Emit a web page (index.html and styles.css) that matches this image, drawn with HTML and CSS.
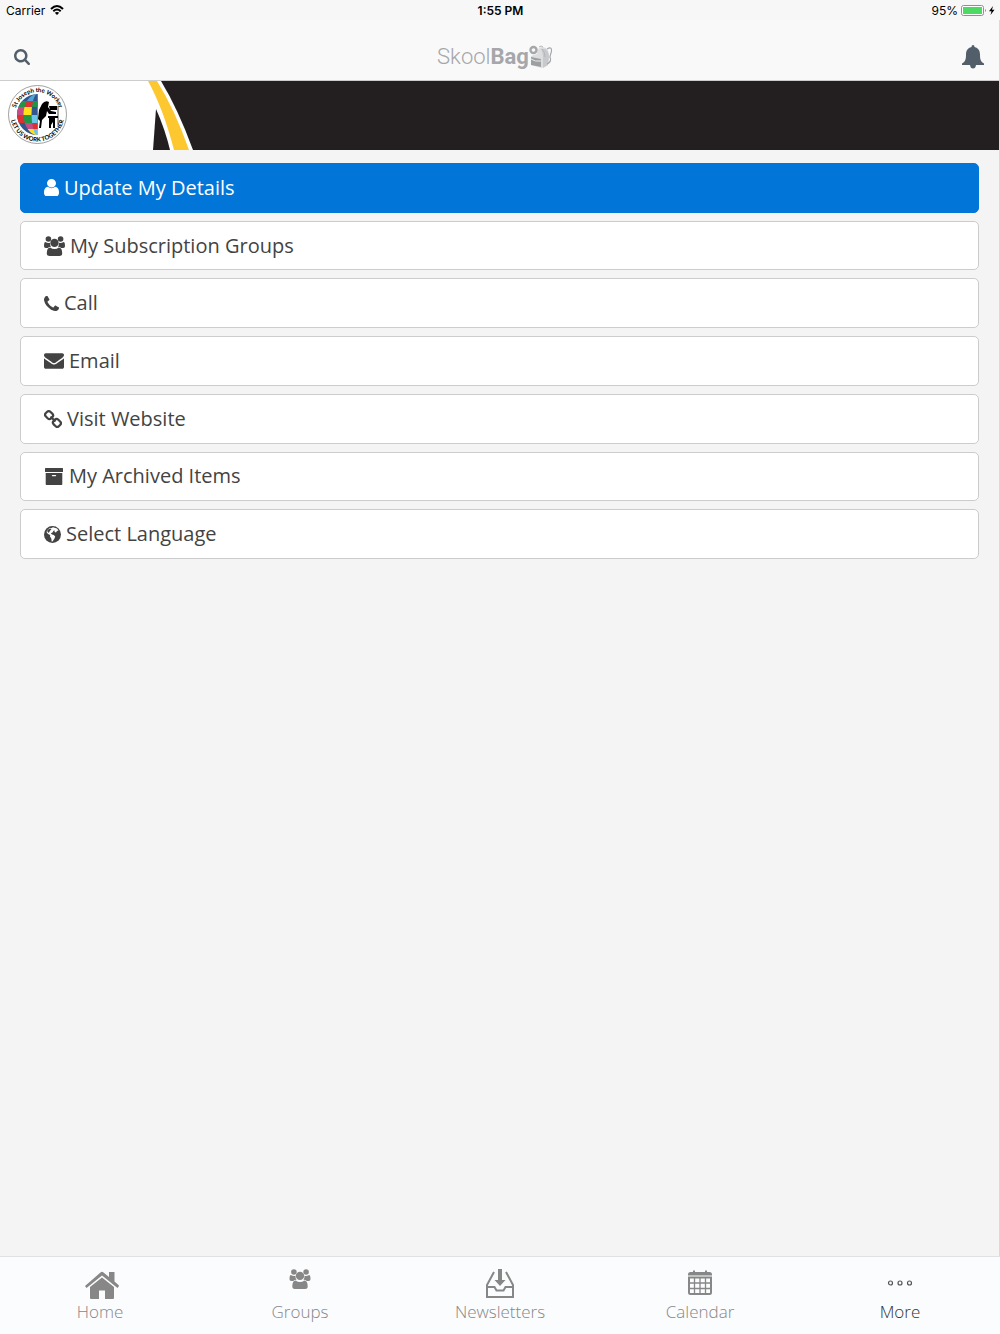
FILE: index.html
```html
<!DOCTYPE html>
<html lang="en">

<head>
    <meta charset="UTF-8">
    <meta name="viewport" content="width=device-width, initial-scale=1.0">
    <title>SkoolBag - More</title>
    <link rel="stylesheet" href="styles.css">
</head>

<body>
    <svg class="defs" aria-hidden="true">
        <symbol id="icon-users" viewBox="0 0 21 20">
            <circle cx="4.4" cy="3" r="2.8"/>
            <circle cx="16.6" cy="3" r="2.8"/>
            <circle cx="10.5" cy="6.9" r="4.2"/>
            <path d="M1.4 6Q3 7 4.5 7Q5.300 7 6 6.700Q5.800 9 7 10.700Q5 10.800 3.800 12H1.800Q0 12 0 10.300Q0 6 1.400 6Z"/>
            <path d="M19.600 6Q18 7 16.500 7Q15.700 7 15 6.700Q15.200 9 14 10.700Q16 10.800 17.200 12H19.200Q21 12 21 10.300Q21 6 19.600 6Z"/>
            <path d="M6.200 11.400Q8 13 10.500 13T14.800 11.400Q18.200 11.400 18.200 17.500Q18.200 20 15.500 20H5.500Q2.800 20 2.800 17.500Q2.800 11.400 6.200 11.400Z"/>
        </symbol>
    </svg>
    <div class="status-bar">
        <div class="carrier">
            <span>Carrier</span>
            <svg width="14" height="10" viewBox="0 0 14 10" fill="none" stroke="#000" stroke-width="2">
                <path d="M1 4Q7-2 13 4M3.300 6.300Q7 2.800 10.700 6.300"/>
                <path d="M7 10L4.800 7.800Q7 6 9.200 7.800Z" fill="#000" stroke="none"/>
            </svg>
        </div>
        <div class="time">1:55 PM</div>
        <div class="battery">
            <span>95%</span>
            <svg width="34" height="11" viewBox="0 0 34 11">
                <rect x=".5" y=".5" width="22" height="10" rx="2" fill="#fff" stroke="#8f8f8f"/>
                <rect x="2" y="2" width="19" height="7" fill="#4cd964"/>
                <path d="M24 4Q26 5.500 24 7Z" fill="#8f8f8f"/>
                <path d="M32 1L28 6.300H30.500L29.500 10L33.500 4.800H31Z"/>
            </svg>
        </div>
    </div>
    <div class="app">
        <header class="navbar">
            <button type="button" class="icon-button" aria-label="Search">
                <svg width="16" height="16" viewBox="64 128 1664 1664" fill="currentColor"><path d="M1216 832q0-185-131.500-316.500t-316.500-131.500-316.500 131.500-131.500 316.500 131.500 316.500 316.500 131.500 316.500-131.500 131.500-316.500zm512 832q0 52-38 90t-90 38q-54 0-90-38l-343-342q-179 124-399 124-143 0-273.500-55.500t-225-150-150-225-55.500-273.500 55.500-273.500 150-225 225-150 273.500-55.500 273.500 55.500 225 150 150 225 55.500 273.500q0 220-124 399l343 343q37 37 37 90z"/></svg>
            </button>
            <div class="brand">
                <span>Skool<b>Bag</b></span>
                <svg width="24" height="24" viewBox="0 0 24 24" fill="none">
                    <path d="M8 9Q8 2 14 2Q20 3 20 11L19 20L13 23L2 20V11Z" fill="#dcdddf"/>
                    <path d="M16 4Q20 6 20 12L19 20L14 23V11Q14 7 12 4" fill="#c8c9cc"/>
                    <path d="M10 2Q12 0 14 2M13 4Q16 7 16 12" stroke="#b4b6b9"/>
                    <path d="M2 12L12 14V22L2 20Z" fill="#9da0a3"/>
                    <path d="M2 14Q6 17 12 16" stroke="#e7e8e9"/>
                    <circle cx="4.500" cy="5" r="3" stroke="#a5a7aa" stroke-width="2.400"/>
                    <path d="M18 4Q23 1 22.500 6C22 10 20 10 21.500 14Q22 17 18 19" stroke="#a5a7aa" stroke-width="1.200"/>
                </svg>
            </div>
            <button type="button" class="icon-button" aria-label="Notifications">
                <svg width="22" height="24" viewBox="0 0 22 24" fill="currentColor"><path d="M9.500 2Q9.500 0 11 0T12.500 2C16.500 3 18 6 18 9.500C18 14 18.500 16.500 22 18.500V20H14Q13.500 23.500 11 23.500T8 20H0V18.500C3.500 16.500 4 14 4 9.500C4 6 5.500 3 9.500 2Z"/></svg>
            </button>
        </header>
        <div class="banner">
            <svg width="200" height="69" viewBox="0 0 200 69" role="img" aria-label="St Joseph the Worker">
                <path d="M0 0H161Q178 28 193 69H0Z" fill="#fff"/>
                <path d="M148 0H157Q175 29 189 69H174Q163 27 148 0Z" fill="#fdc82f"/>
                <path d="M156 28Q165 48 170 69H153Z" fill="#231f20"/>
                <circle cx="37.500" cy="33.500" r="29" fill="#fff" stroke="#777" stroke-width=".7"/>
                <clipPath id="globe-outer"><path d="M37.500 13A20.500 20.500 0 0 0 37.500 54Z"/></clipPath>
                <clipPath id="globe-middle"><path d="M37.500 13A14 20.500 0 0 0 37.500 54Z"/></clipPath>
                <clipPath id="globe-inner"><path d="M37.500 13A6 20.500 0 0 0 37.500 54Z"/></clipPath>
                <g clip-path="url(#globe-outer)">
                    <path d="M16 12H38V55H16Z" fill="#31568f"/>
                    <path d="M16 20H38V26H16Z" fill="#229447"/>
                    <path d="M16 26H38V34H16Z" fill="#c44d87"/>
                    <path d="M16 34H38V42H16Z" fill="#dc3031"/>
                </g>
                <g clip-path="url(#globe-middle)">
                    <path d="M16 12H38V20H16Z" fill="#4fa6d5"/>
                    <path d="M16 20H38V26H16Z" fill="#dc3031"/>
                    <path d="M16 26H38V34H16Z" fill="#ffe11a"/>
                    <path d="M16 34H38V42H16Z" fill="#229447"/>
                    <path d="M16 42H38V48H16Z" fill="#c44d87"/>
                    <path d="M16 48H38V55H16Z" fill="#ffe11a"/>
                </g>
                <g clip-path="url(#globe-inner)">
                    <path d="M16 12H38V20H16Z" fill="#31568f"/>
                    <path d="M16 20H38V26H16Z" fill="#229447"/>
                    <path d="M16 26H38V34H16Z" fill="#31568f"/>
                    <path d="M16 34H38V42H16Z" fill="#6ac5ea"/>
                    <path d="M16 42H38V48H16Z" fill="#dc3031"/>
                    <path d="M16 48H38V55H16Z" fill="#6ac5ea"/>
                </g>
                <path d="M42 23Q45 19 49 21L48 26L51 30L56 31V33L49 33L47 30L46 35L42 39L41 47H39L40 40L38 38L39 29Z"/>
                <path d="M49 25H57V29H50ZM48 35H58V37H55V47H53V41L51 44V47H49V37H48Z"/>
                <path d="M58 25V43" stroke="#000" stroke-width=".7"/>
                <path id="arc-top" d="M15 33.500A22.500 22.500 0 0 1 60 33.500" fill="none"/>
                <path id="arc-bottom" d="M10.500 33.500A27 27 0 0 0 64.500 33.500" fill="none"/>
                <text class="crest-text"><textPath href="#arc-top" startOffset="50%">St Joseph the Worker</textPath></text>
                <text class="crest-text"><textPath href="#arc-bottom" startOffset="50%">LET US WORK TOGETHER</textPath></text>
            </svg>
        </div>
        <main class="menu">
            <button type="button" class="menu-item primary">
                <svg width="15" height="17" viewBox="256 128 1280 1536" preserveAspectRatio="none"><path d="M1536 1399q0 109-62.500 187t-150.500 78h-854q-88 0-150.500-78t-62.500-187q0-85 8.500-160.500t31.500-152 58.500-131 94-89 134.500-34.500q131 128 313 128t313-128q76 0 134.500 34.500t94 89 58.500 131 31.500 152 8.500 160.500zm-256-887q0 159-112.500 271.500t-271.500 112.500-271.500-112.500-112.500-271.500 112.500-271.500 271.500-112.500 271.500 112.500 112.500 271.500z"/></svg>
                Update My Details
            </button>
            <button type="button" class="menu-item">
                <svg width="21" height="20"><use href="#icon-users"/></svg>
                My Subscription Groups
            </button>
            <button type="button" class="menu-item">
                <svg width="15" height="15" viewBox="192 128 1408 1408"><path d="M1600 1240q0 27-10 70.500t-21 68.500q-21 50-122 106-94 51-186 51-27 0-52.500-3.500t-57.500-12.500-47.500-14.500-55.500-20.500-49-18q-98-35-175-83-128-79-264.500-215.500t-215.500-264.500q-48-77-83-175-3-9-18-49t-20.500-55.500-14.500-47.500-12.500-57.500-3.500-52.500q0-92 51-186 56-101 106-122 25-11 68.500-21t70.500-10q14 0 21 3 18 6 53 76 11 19 30 54t35 63.500 31 53.500q3 4 17.500 25t21.500 35.500 7 28.500q0 20-28.500 50t-62 55-62 53-28.500 46q0 9 5 22.500t8.500 20.500 14 24 11.500 19q76 137 174 235t235 174q2 1 19 11.500t24 14 20.500 8.500 22.500 5q18 0 46-28.500t53-62 55-62 50-28.500q14 0 28.500 7t35.500 21.500 25 17.500q25 15 53.500 31t63.500 35 54 30q70 35 76 53 3 7 3 21z"/></svg>
                Call
            </button>
            <button type="button" class="menu-item">
                <svg width="20" height="16" viewBox="0 256 1792 1408"><path d="M1792 710v794q0 66-47 113t-113 47h-1472q-66 0-113-47t-47-113v-794q44 49 101 87 362 246 497 345 57 42 92.500 65.500t94.500 48 110 24.500h2q51 0 110-24.500t94.500-48 92.500-65.500q170-123 498-345 57-39 100-87zm0-294q0 79-49 151t-122 123q-376 261-468 325-10 7-42.500 31t-54 38.500-52 32.500-57.500 27-50 9h-2q-23 0-50-9t-57.500-27-52-32.500-54-38.500-42.500-31q-91-64-262-182.500t-205-142.500q-62-42-117-115.500t-55-136.500q0-78 41.500-130t118.500-52h1472q65 0 112.500 47t47.500 113z"/></svg>
                Email
            </button>
            <button type="button" class="menu-item">
                <svg width="18" height="18" viewBox="0 0 18 18">
                    <g fill="none" stroke="#434343" stroke-width="2.200">
                        <rect x="1.300" y="1.800" width="7.600" height="6.600" rx="2.600" transform="rotate(45 5.100 5.100)"/>
                        <rect x="9.100" y="9.600" width="7.600" height="6.600" rx="2.600" transform="rotate(45 12.900 12.900)"/>
                        <path d="M6.500 6.500L11.500 11.500"/>
                    </g>
                </svg>
                Visit Website
            </button>
            <button type="button" class="menu-item">
                <svg width="20" height="17" viewBox="0 0 20 17">
                    <path d="M1.500 0H18.500Q19 0 19 .500V3.500Q19 4 18.500 4H1.500Q1 4 1 3.500V.500Q1 0 1.500 0Z"/>
                    <path fill-rule="evenodd" d="M1.700 5H18.300V16.300Q18.300 17 17.500 17H2.500Q1.700 17 1.700 16.300ZM8.500 7Q7.800 7 7.800 7.600T8.500 8.200H11.500Q12.200 8.200 12.200 7.600T11.500 7Z"/>
                </svg>
                My Archived Items
            </button>
            <button type="button" class="menu-item">
                <svg width="17" height="17" viewBox="0 0 17 17">
                    <circle cx="8.500" cy="8.500" r="8.500"/>
                    <path fill="#fff" d="M9 1.300L13 2.500L14.500 4.500L13 5L12 6.500L10.500 6L10.800 4.500L9.500 4.800L8.500 6.500L6.800 7.200L8 8.500L9.800 9L11.200 10.500L10.500 12.500L8.500 15.600L7.700 15.500L7.300 12.500L6 10.500L6.200 9L4 8L2.500 6Q3.500 3.200 6 1.700L6.500 2.500Z"/>
                    <path d="M3 5L5 2.800L7.500 3L6 4.800L4.800 7Z"/>
                </svg>
                Select Language
            </button>
        </main>
    </div>
    <nav class="tabs">
        <a href="#" class="tab">
            <svg width="38" height="30" viewBox="0 0 38 30">
                <path d="M21 3L38 17L36.500 19L21 6.500L5.500 19L4 17L19.500 3.500Q21 2 22.500 3.500L28 8V3H33.500V12.500L38 16.500L36.500 19"/>
                <path d="M21 8.500L33 18V29Q33 30 32 30H24V21.500H18V30H10Q9 30 9 29V18Z"/>
            </svg>
            <span>Home</span>
        </a>
        <a href="#" class="tab">
            <svg width="38" height="30" viewBox="0 0 38 30"><use href="#icon-users" x="8" y="0" width="22" height="20"/></svg>
            <span>Groups</span>
        </a>
        <a href="#" class="tab">
            <svg width="38" height="30" viewBox="0 0 38 30">
                <path d="M17 0H21V11H24.500L19 17L13.500 11H17Z"/>
                <path d="M13 3L6 16V28H32V16L25 3M6 18H13.500L15.500 21.500H22.500L24.500 18H32" fill="none" stroke="#878787" stroke-width="2"/>
            </svg>
            <span>Newsletters</span>
        </a>
        <a href="#" class="tab">
            <svg width="38" height="30" viewBox="0 0 38 30">
                <path d="M7 6.500V5.500Q7 3 9.500 3H12V1.500H14V3H24V1.500H26V3H28.500Q31 3 31 5.500V6.500Z"/>
                <path d="M8 8.500H30V23.500Q30 25 28.500 25H9.500Q8 25 8 23.500Z" fill="none" stroke="#878787" stroke-width="2"/>
                <path d="M13.500 8V25M19 8V25M24.500 8V25M8 14H30M8 19.500H30" fill="none" stroke="#878787" stroke-width="1.300"/>
            </svg>
            <span>Calendar</span>
        </a>
        <a href="#" class="tab active">
            <svg width="38" height="30" viewBox="0 0 38 30">
                <g fill="none" stroke="#555" stroke-width="1.200">
                    <circle cx="9.500" cy="14" r="2"/>
                    <circle cx="19" cy="14" r="2"/>
                    <circle cx="28.500" cy="14" r="2"/>
                </g>
            </svg>
            <span>More</span>
        </a>
    </nav>
</body>

</html>
```

FILE: styles.css
```css
* {
    box-sizing: border-box;
}

body {
    display: flex;
    flex-direction: column;
    min-height: 100vh;
    margin: 0;
    background: #f4f4f4;
    font-family: "Open Sans", sans-serif;
    color: #434343;
}

svg {
    display: block;
    flex: none;
}

.defs {
    position: absolute;
    width: 0;
    height: 0;
}

.status-bar {
    display: grid;
    grid-template-columns: 1fr auto 1fr;
    align-items: center;
    height: 20px;
    padding: 0 5px 0 6px;
    background: #f7f7f7;
    font-family: Inter, sans-serif;
    font-size: 12px;
    color: #000;
}

.carrier,
.battery {
    display: flex;
    align-items: center;
    gap: 5px;
}

.battery {
    justify-content: flex-end;
    gap: 3px;
}

.time {
    font-weight: 600;
}

.app {
    flex: 1;
    border-right: 1px solid #d9d9d9;
}

.navbar {
    display: grid;
    grid-template-columns: 1fr auto 1fr;
    align-items: center;
    height: 61px;
    padding: 13px 15px 0 14px;
    background: #f9f9f9;
    border-bottom: 1px solid #ccc;
}

.icon-button {
    justify-self: start;
    padding: 0;
    border: 0;
    background: none;
    color: #525f6b;
}

.icon-button:last-child {
    justify-self: end;
}

.brand {
    display: flex;
    align-items: center;
    padding-right: 8px;
    font-family: Roboto, sans-serif;
    font-size: 22px;
    font-weight: 300;
    line-height: 24px;
    color: #a5a7aa;
}

.brand b {
    font-weight: 700;
}

.banner {
    background: #231f20;
}

.crest-text {
    font-family: Lato, sans-serif;
    font-size: 6px;
    font-weight: 700;
    text-anchor: middle;
}

/* rows share the height evenly */
.menu {
    display: grid;
    grid-auto-rows: 1fr;
    gap: 8px;
    min-height: 422px;
    padding: 13px 20px;
}

.menu-item {
    display: flex;
    align-items: center;
    gap: 5px;
    padding: 0 23px;
    border: 1px solid #ccc;
    border-radius: 5px;
    background: #fff;
    font-family: inherit;
    font-size: 20px;
    line-height: 28px;
    color: #434343;
    text-align: left;
}

.menu-item svg {
    fill: currentColor;
}

.primary {
    border-color: #0275d8;
    background: #0275d8;
    color: #fff;
}

.tabs {
    display: grid;
    grid-template-columns: repeat(5, 1fr);
    height: 78px;
    border-top: 1px solid #e0e0e0;
    background: #fbfcfe;
}

.tab {
    display: flex;
    flex-direction: column;
    align-items: center;
    padding-top: 12px;
    font-size: 17px;
    font-weight: 300;
    line-height: 26px;
    color: #878787;
    fill: #878787;
    text-decoration: none;
}

.active {
    color: #333;
}
```
